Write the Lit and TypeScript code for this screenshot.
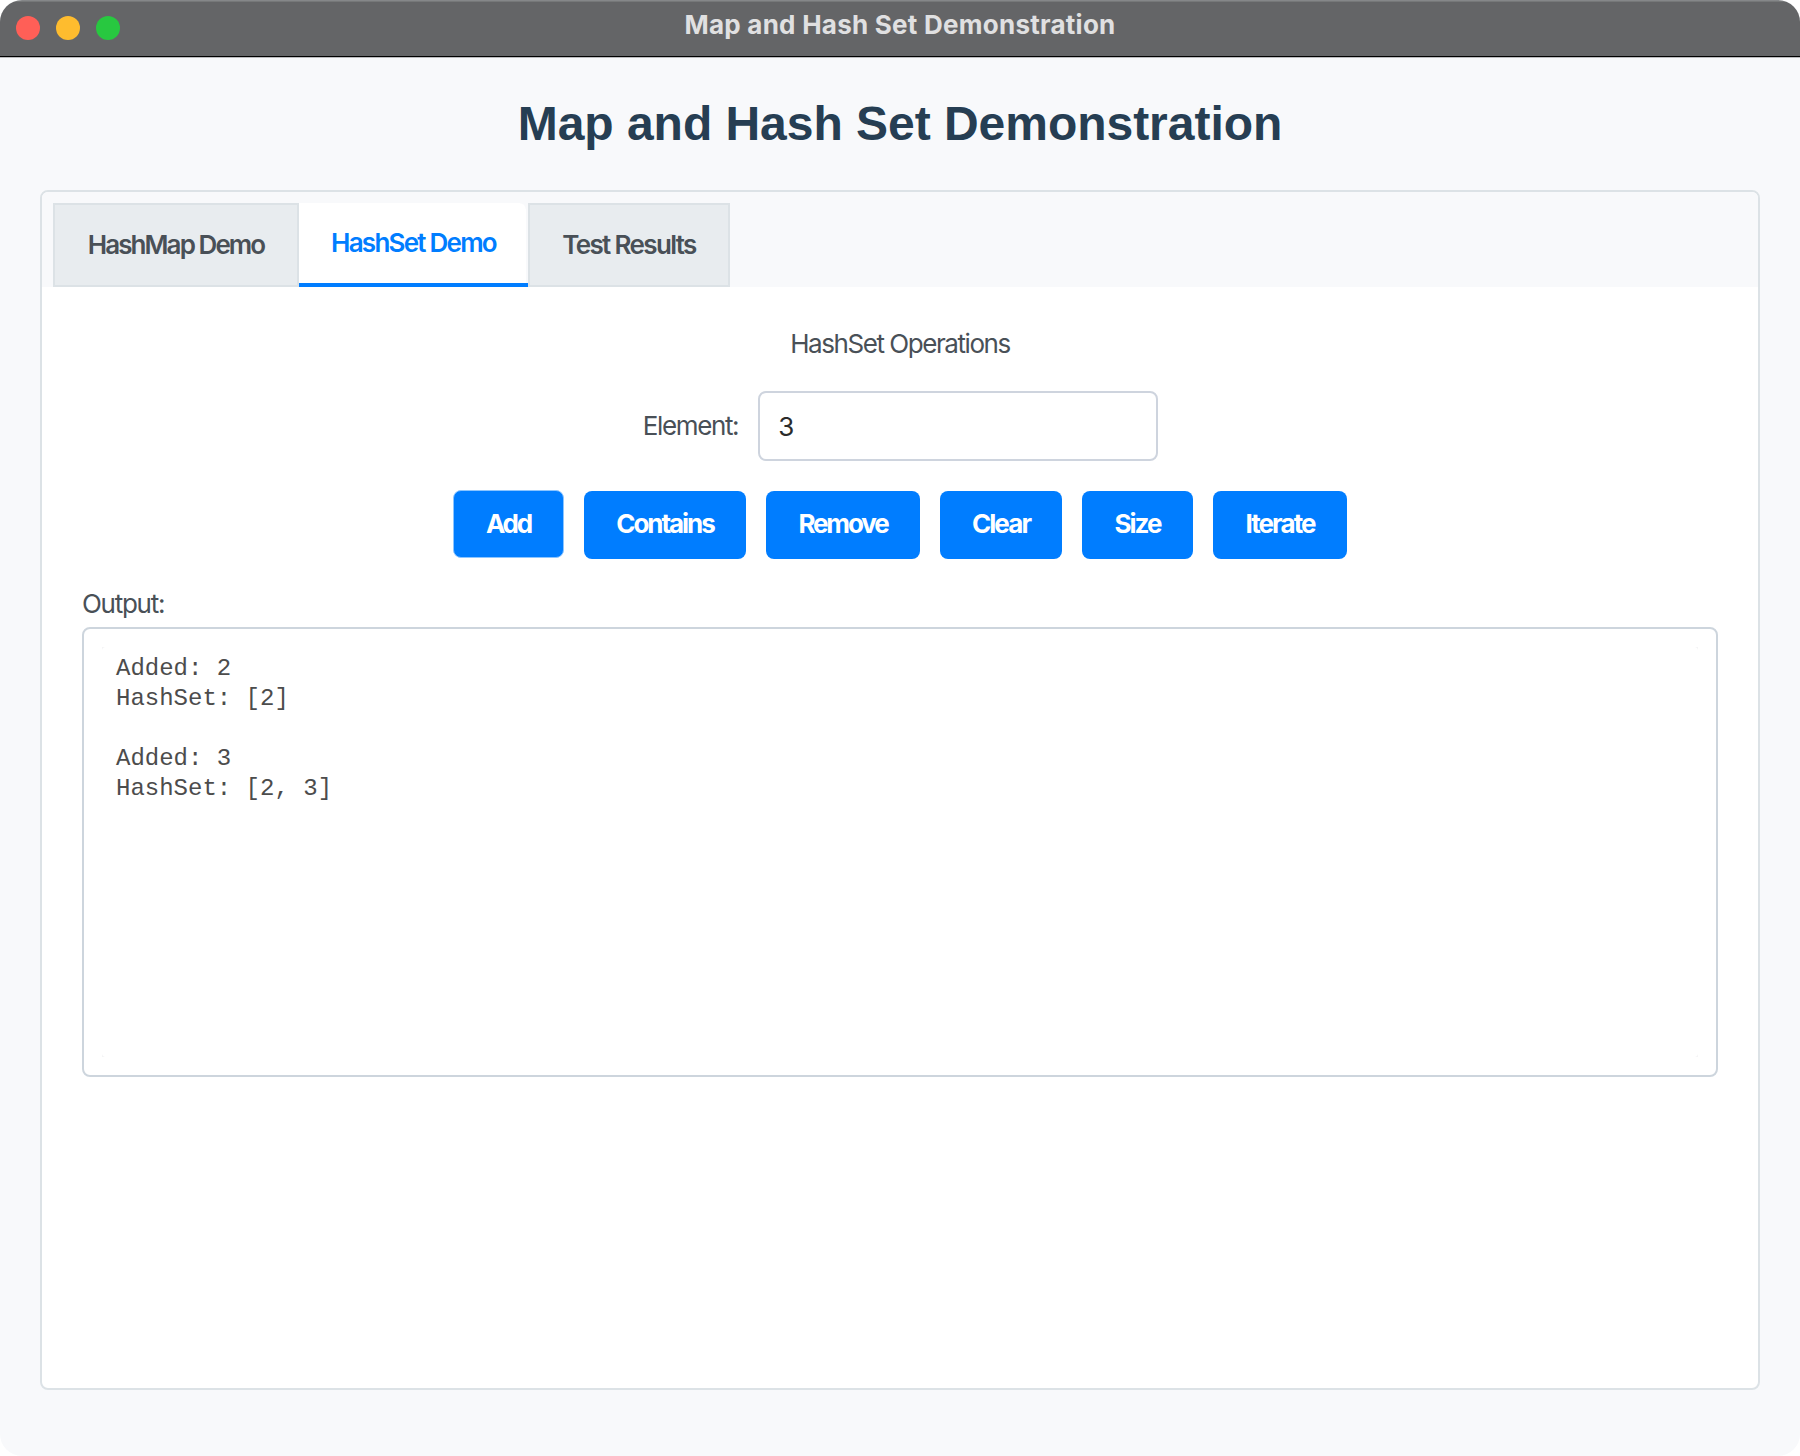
import { LitElement, html, css } from "lit";
import { customElement, state } from "lit/decorators.js";
import { classMap } from "lit/directives/class-map.js";
import { styleMap } from "lit/directives/style-map.js";

interface Item {
  label: string;
  width: number;
  tracking: number;
}

const TABS: Item[] = [
  { label: "HashMap Demo", width: 246, tracking: -1.92 },
  { label: "HashSet Demo", width: 229, tracking: -1.75 },
  { label: "Test Results", width: 202, tracking: -1.64 },
];

const ACTIONS: Item[] = [
  { label: "Add", width: 111, tracking: -2.2 },
  { label: "Contains", width: 162, tracking: -2.05 },
  { label: "Remove", width: 154, tracking: -2.15 },
  { label: "Clear", width: 122, tracking: -1.9 },
  { label: "Size", width: 111, tracking: -2 },
  { label: "Iterate", width: 134, tracking: -1.9 },
];

const LOG = ["Added: 2", "HashSet: [2]", "", "Added: 3", "HashSet: [2, 3]"].join("\n");

const sized = (item: Item) =>
  styleMap({ width: `${item.width}px`, letterSpacing: `${item.tracking}px` });

@customElement("title-bar")
class TitleBar extends LitElement {
  static styles = css`
    :host {
      display: block;
    }
    .bar {
      display: grid;
      grid-template-columns: 1fr auto 1fr;
      height: 58px;
      box-sizing: border-box;
      padding: 0 16px;
      background: linear-gradient(#858789 0 1px, #767879 1px 2px, #646567 2px 56px, #000 56px 57px, #bbbbbe 57px);
    }
    .lights {
      display: flex;
      gap: 16px;
      padding-top: 16px;
    }
    .light {
      width: 24px;
      height: 24px;
      border-radius: 50%;
    }
    .close {
      background: #ff5f57;
    }
    .minimize {
      background: #febc2e;
    }
    .zoom {
      background: #28c840;
    }
    .title {
      font: 700 26px/50px Inter, sans-serif;
      letter-spacing: 0.25px;
      color: #e0e0e1;
      white-space: nowrap;
    }
  `;

  render() {
    return html`
      <header class="bar">
        <div class="lights">
          <span class="light close"></span>
          <span class="light minimize"></span>
          <span class="light zoom"></span>
        </div>
        <div class="title">Map and Hash Set Demonstration</div>
      </header>
    `;
  }
}

@customElement("app-root")
class AppRoot extends LitElement {
  @state() private active = 1;

  static styles = css`
    :host {
      display: block;
      background: #fff;
    }
    .window {
      display: flex;
      flex-direction: column;
      width: 1800px;
      height: 1456px;
      box-sizing: border-box;
      overflow: hidden;
      border-radius: 22px;
      background: #f8f9fb;
      color: #495057;
      font: 400 26px/32px Inter, sans-serif;
    }
    .heading {
      margin: 0;
      padding: 38px 0;
      font: 700 48px/56px "Liberation Sans", Arial, sans-serif;
      text-align: center;
      letter-spacing: -0.03px;
      color: #263e53;
    }
    .panel {
      display: flex;
      flex-direction: column;
      margin: 0 40px;
      height: 1200px;
      box-sizing: border-box;
      border: 2px solid #dce2e6;
      border-radius: 8px;
      overflow: hidden;
      background: #fff;
    }
    .tabs {
      display: flex;
      padding: 11px 11px 0;
      background: #f8f9fb;
    }
    .tab {
      height: 84px;
      box-sizing: border-box;
      padding: 0;
      border: 2px solid #dce2e6;
      background: #e8ecef;
      color: #495057;
      font: 600 26px/32px Inter, sans-serif;
      white-space: nowrap;
    }
    .tab.active {
      border: 0;
      border-bottom: 4px solid #007dff;
      background:
        radial-gradient(circle at 0 100%, #fff 5px, #f8f9fb 6px) right 2px top 0 / 6px 6px no-repeat,
        linear-gradient(#f8f9fb, #f8f9fb) right / 2px 100% no-repeat,
        #fff;
      color: #007dff;
    }
    .content {
      display: flex;
      flex-direction: column;
      align-items: center;
      padding: 41px 40px 0;
    }
    .subtitle {
      letter-spacing: -1.44px;
    }
    .field {
      display: flex;
      align-items: center;
      gap: 20px;
      margin-top: 31px;
      padding-left: 1px;
    }
    .label {
      letter-spacing: -1.36px;
    }
    .input {
      width: 400px;
      height: 70px;
      box-sizing: border-box;
      padding: 0 18px;
      border: 2px solid #ced4de;
      border-radius: 8px;
      outline: 0;
      background: #fff;
      color: #2b2b2b;
      font: 400 26px/32px Inter, sans-serif;
    }
    .actions {
      display: flex;
      gap: 20px;
      margin-top: 30px;
    }
    .action {
      height: 68px;
      box-sizing: border-box;
      padding: 0 0 2px;
      border: 0;
      border-radius: 8px;
      background: #007dff;
      color: #fff;
      font: 700 26px/32px Inter, sans-serif;
      white-space: nowrap;
    }
    .action.focused {
      height: 68px;
      margin-top: -1px;
      padding: 0;
      border: 1px solid #8cc5ff;
      background-clip: border-box;
    }
    .caption {
      align-self: stretch;
      margin-top: 29px;
      letter-spacing: -1.27px;
    }
    .output {
      align-self: stretch;
      height: 450px;
      box-sizing: border-box;
      margin-top: 7px;
      padding: 18px;
      border: 2px solid #cdd5dd;
      border-radius: 8px;
      background: #fff;
    }
    .viewport {
      height: 100%;
      background: #f4f4f5;
    }
    .log {
      height: 100%;
      box-sizing: border-box;
      margin: 0;
      padding: 7px 14px;
      border-radius: 4px;
      background: #fff;
      color: #4c4c4c;
      font: 400 24px/30px "Liberation Mono", "Courier New", monospace;
    }
  `;

  render() {
    return html`
      <div class="window">
        <title-bar></title-bar>
        <h1 class="heading">Map and Hash Set Demonstration</h1>
        <main class="panel">
          <nav class="tabs">
            ${TABS.map(
              (tab, i) => html`<button
                class=${classMap({ tab: true, active: i === this.active })}
                style=${sized(tab)}
                @click=${() => (this.active = i)}
              >${tab.label}</button>`
            )}
          </nav>
          <section class="content">
            <div class="subtitle">HashSet Operations</div>
            <div class="field">
              <label class="label" for="element">Element:</label>
              <input class="input" id="element" .value=${"3"} />
            </div>
            <div class="actions">
              ${ACTIONS.map(
                (action, i) => html`<button
                  class=${classMap({ action: true, focused: i === 0 })}
                  style=${sized(action)}
                >${action.label}</button>`
              )}
            </div>
            <div class="caption">Output:</div>
            <div class="output">
              <div class="viewport"><pre class="log">${LOG}</pre></div>
            </div>
          </section>
        </main>
      </div>
    `;
  }
}
